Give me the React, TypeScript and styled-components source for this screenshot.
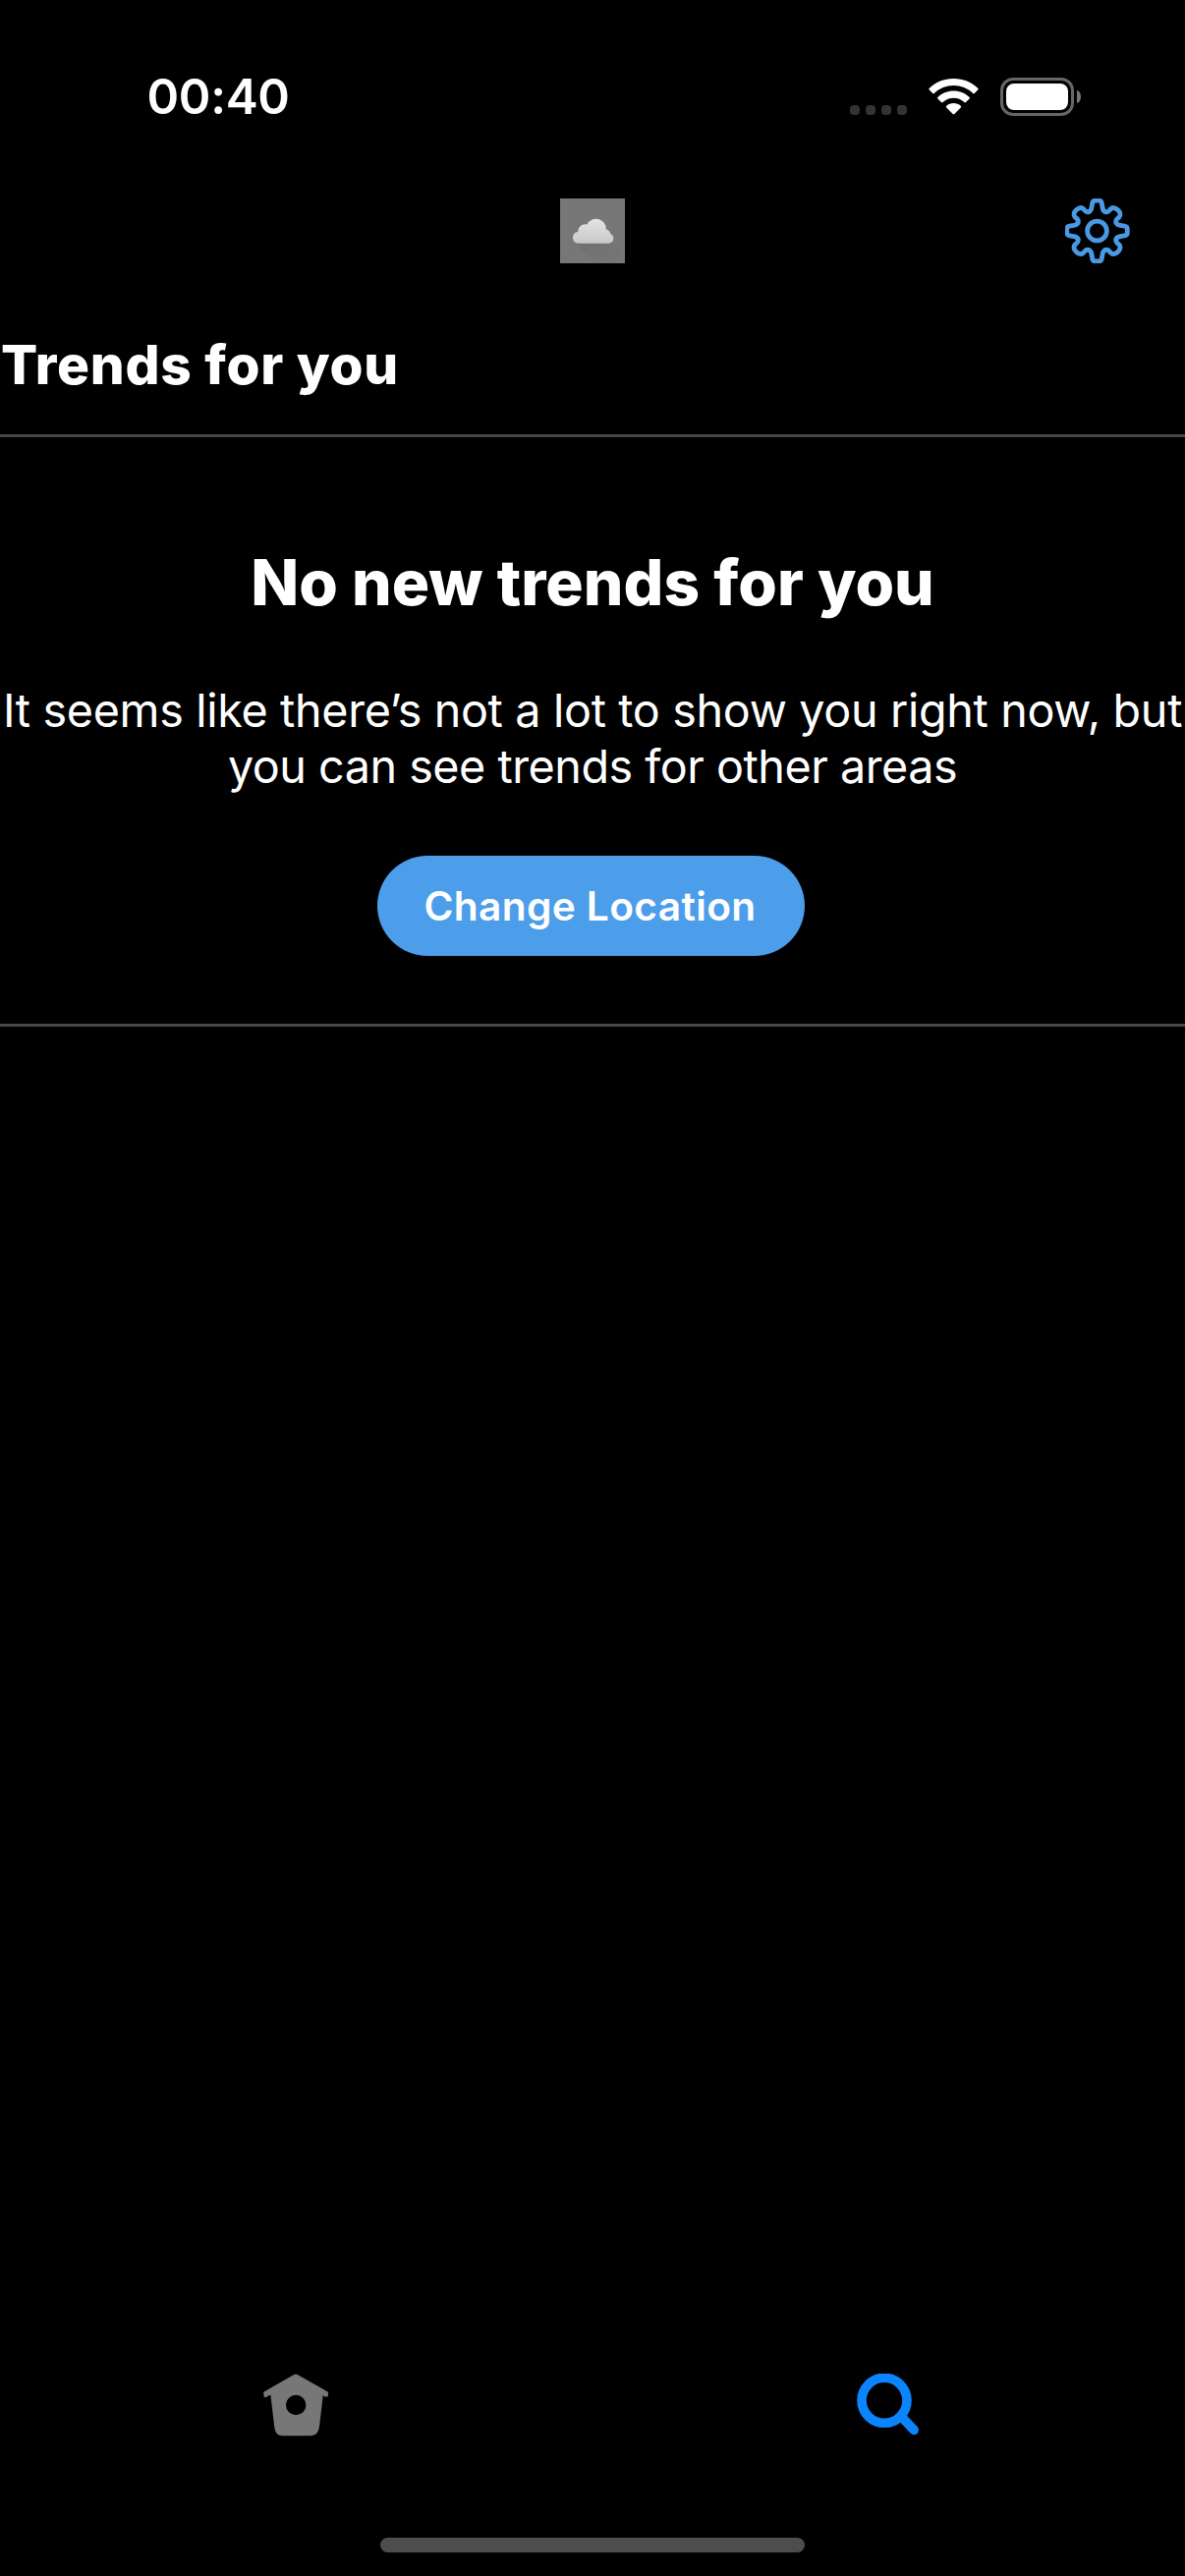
import React from 'react';
import styled, { createGlobalStyle } from 'styled-components';

const GlobalStyle = createGlobalStyle`
  *, *::before, *::after { box-sizing: border-box; }
  body { margin: 0; background: #000; }
`;

const Screen = styled.div`
  width: 1206px;
  height: 2622px;
  display: flex;
  flex-direction: column;
  background: #000;
  color: #fff;
  font-family: Inter, 'Liberation Sans', sans-serif;
  overflow: hidden;
`;

const StatusBar = styled.header`
  display: flex;
  align-items: center;
  justify-content: space-between;
  height: 169px;
  padding: 27px 106px 0 149.5px;
`;

const Time = styled.time`
  font-size: 49.5px;
  line-height: 60px;
  font-weight: 600;
  letter-spacing: -0.3px;
`;

const Indicators = styled.div`
  display: flex;
  align-items: center;
`;

const SignalDots = styled.div`
  display: flex;
  gap: 6px;
  margin: 27px 22px 0 0;
`;

const Dot = styled.span`
  width: 10px;
  height: 10px;
  border-radius: 4px;
  background: #333;
`;

const WifiIcon = styled.svg`
  width: 51px;
  height: 37px;
  margin-right: 22px;
`;

const BatteryShell = styled.div`
  width: 75px;
  height: 39px;
  padding: 3px;
  border: 3px solid #666;
  border-radius: 13px;
`;

const BatteryLevel = styled.div`
  height: 100%;
  border-radius: 8px;
  background: #fff;
`;

const BatteryTip = styled.div`
  width: 4px;
  height: 13px;
  margin-left: 3px;
  border-radius: 0 4px 4px 0 / 0 6.5px 6.5px 0;
  background: #777;
`;

const NavBar = styled.nav`
  display: grid;
  grid-template-columns: 1fr 66px 1fr;
  align-items: center;
  height: 132px;
  padding: 0 56px;
`;

const Logo = styled.svg`
  grid-column: 2;
  width: 66px;
  height: 66px;
  background: #777;
`;

const PlainButton = styled.button`
  display: flex;
  padding: 0;
  border: 0;
  background: none;
  cursor: pointer;
`;

const SettingsButton = styled(PlainButton)`
  justify-self: end;
`;

const Icon = styled.svg<{ $size: number }>`
  width: ${(p) => p.$size}px;
  height: ${(p) => p.$size}px;
`;

const SectionTitle = styled.h1`
  height: 144px;
  margin: 0;
  padding-left: 1px;
  border-bottom: 3px solid #464649;
  font-size: 55px;
  line-height: 140px;
  font-weight: 800;
  letter-spacing: 0.7px;
  white-space: nowrap;
`;

const EmptyState = styled.section`
  display: flex;
  flex-direction: column;
  align-items: center;
  height: 600px;
  padding-top: 109px;
  border-bottom: 3px solid #464649;
  text-align: center;
`;

const Headline = styled.h2`
  margin: 0 0 63px;
  font-size: 64px;
  line-height: 78px;
  font-weight: 800;
  letter-spacing: 0.05px;
`;

const Message = styled.p`
  margin: 0 0 62px;
  font-size: 46.7px;
  line-height: 57px;
  font-weight: 400;
  white-space: nowrap;
`;

const MessageLine = styled.span<{ $tracking: number }>`
  display: block;
  letter-spacing: ${(p) => p.$tracking}px;
`;

const Action = styled.button`
  width: 435px;
  height: 102px;
  margin-right: 3px;
  padding: 1px 2px 0 0;
  border: 0;
  border-radius: 51px;
  background: #4c9eeb;
  color: #fff;
  font: 600 40.7px/101px Inter, 'Liberation Sans', sans-serif;
  letter-spacing: 0.35px;
  cursor: pointer;
`;

const TabBar = styled.nav`
  display: grid;
  grid-template-columns: 1fr 1fr;
  margin-top: auto;
  padding-right: 2px;
`;

const Tab = styled(PlainButton)`
  justify-content: center;
`;

const HomeIndicator = styled.div`
  width: 432px;
  height: 15px;
  margin: 101px auto 24px;
  border-radius: 8px;
  background: #4d4d4d;
`;

const straightTooth =
  'M-8 -19.6 C-6.4 -20.4 -5.9 -21.6 -5.6 -23.5 L-4.8 -28 Q-4.3 -30.8 -2 -30.8 L2 -30.8 Q4.3 -30.8 4.8 -28 L5.6 -23.5 C5.9 -21.6 6.4 -20.4 8 -19.6';

const roundTooth =
  'M-8 -19.6 C-6.2 -20.4 -5.6 -21.6 -5.8 -23.5 L-6 -25.5 C-6 -28.4 -3.6 -30 0 -30 C3.6 -30 6 -28.4 6 -25.5 L5.8 -23.5 C5.6 -21.6 6.2 -20.4 8 -19.6';

const Gear = () => (
  <Icon $size={66} viewBox="0 0 66 66" aria-label="Settings">
    <g transform="translate(32.5 33)" fill="none" stroke="#4a99e3" strokeWidth="4.8" strokeLinecap="round">
      {[0, 90, 180, 270].map((angle) => (
        <g key={angle} transform={`rotate(${angle})`}>
          <path d={straightTooth} />
          <path d={roundTooth} transform="rotate(45)" />
        </g>
      ))}
      <circle r="9.9" />
    </g>
  </Icon>
);

const Cloud = () => (
  <Logo viewBox="0 0 66 66">
    <defs>
      <linearGradient id="cloud" x1="0" y1="0" x2="0" y2="1">
        <stop offset="0" stopColor="#e4e4e4" />
        <stop offset="1" stopColor="#c8c8c8" />
      </linearGradient>
      <linearGradient id="shade" x1="0" y1="0" x2="1" y2="1">
        <stop offset="0.3" stopColor="#727272" />
        <stop offset="1" stopColor="#777" />
      </linearGradient>
    </defs>
    <path d="M15 45 L53 44 L66 57 V66 H36 Z" fill="url(#shade)" />
    <path
      d="M18 45.7 A5.9 5.9 0 0 1 18.3 34 A7.2 7.2 0 0 1 27.3 26.6 A10.3 10.3 0 0 1 46.9 31.4 Q50.6 32 51.3 36 A5.1 5.1 0 0 1 50 45.7 Z"
      fill="url(#cloud)"
    />
  </Logo>
);

const Wifi = () => (
  <WifiIcon viewBox="0 0 51 37" fill="#fff">
    <path d="M25.5 0 C35.2 0 44 3.7 50.4 9.9 Q51 10.6 50.4 11.3 L46.8 15 Q46 15.7 45.2 15 A28.3 28.3 0 0 0 5.8 15 Q5 15.7 4.2 15 L0.6 11.3 Q0 10.6 0.6 9.9 C7 3.7 15.8 0 25.5 0 Z" />
    <path d="M25.5 12.6 C31.8 12.6 37.4 15 41.6 18.9 Q42.4 19.7 41.6 20.5 L38 24.1 Q37.2 24.8 36.4 24.1 A16 16 0 0 0 14.6 24.1 Q13.8 24.8 13 24.1 L9.4 20.5 Q8.6 19.7 9.4 18.9 C13.6 15 19.2 12.6 25.5 12.6 Z" />
    <path d="M25.5 25 C28.3 25 30.8 26 32.8 27.7 Q33.7 28.5 32.8 29.4 L26.3 36 Q25.5 36.8 24.7 36 L18.2 29.4 Q17.3 28.5 18.2 27.7 C20.2 26 22.7 25 25.5 25 Z" />
  </WifiIcon>
);

const Birdhouse = () => (
  <Icon $size={66} viewBox="0 0 66 66">
    <path
      fillRule="evenodd"
      fill="#777"
      d="M31.3 1 Q33 0 34.7 1 L65.6 18.6 Q66.4 20 65.6 23.4 H62.4 L60.8 21.8 L57 54 Q55.8 63 48.5 63.2 H18.5 Q12.2 63 11.2 54 L7.4 21.8 L4.8 22.4 L3.4 24 H0.8 Q-0.2 20 0.6 18.6 Z M33.2 21.8 A10.2 10.2 0 1 0 33.2 42.2 A10.2 10.2 0 1 0 33.2 21.8 Z"
    />
  </Icon>
);

const Magnifier = () => (
  <Icon $size={64} viewBox="-1 0 64 64" fill="none" stroke="#0a84ff" strokeWidth="9.6" strokeLinecap="round">
    <circle cx="28" cy="27.3" r="23" />
    <path d="M46 44.5 L58.2 57.4" />
  </Icon>
);

export default function App() {
  return (
    <Screen>
      <GlobalStyle />
      <StatusBar>
        <Time>00:40</Time>
        <Indicators>
          <SignalDots>
            <Dot />
            <Dot />
            <Dot />
            <Dot />
          </SignalDots>
          <Wifi />
          <BatteryShell>
            <BatteryLevel />
          </BatteryShell>
          <BatteryTip />
        </Indicators>
      </StatusBar>
      <NavBar>
        <Cloud />
        <SettingsButton>
          <Gear />
        </SettingsButton>
      </NavBar>
      <SectionTitle>Trends for you</SectionTitle>
      <EmptyState>
        <Headline>No new trends for you</Headline>
        <Message>
          <MessageLine $tracking={-0.34}>It seems like there’s not a lot to show you right now, but</MessageLine>
          <MessageLine $tracking={-0.48}>you can see trends for other areas</MessageLine>
        </Message>
        <Action>Change Location</Action>
      </EmptyState>
      <TabBar>
        <Tab>
          <Birdhouse />
        </Tab>
        <Tab>
          <Magnifier />
        </Tab>
      </TabBar>
      <HomeIndicator />
    </Screen>
  );
}
